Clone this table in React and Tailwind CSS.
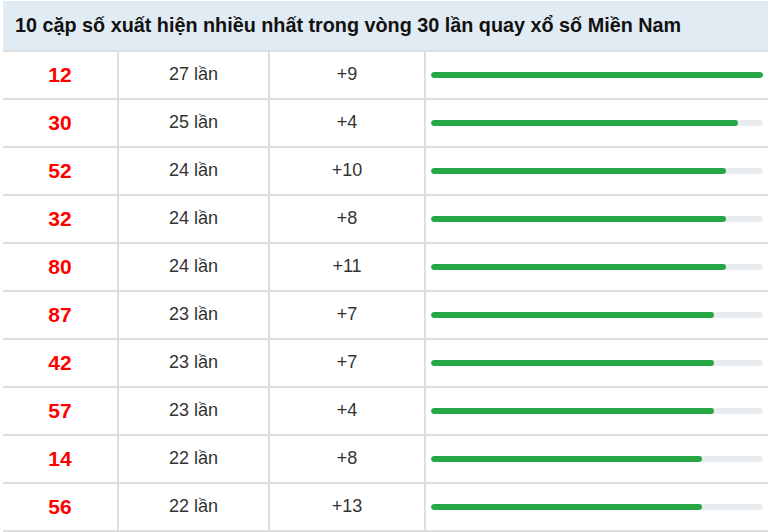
import React from "react";

const rows = [
  ["12", 27, "+9"],
  ["30", 25, "+4"],
  ["52", 24, "+10"],
  ["32", 24, "+8"],
  ["80", 24, "+11"],
  ["87", 23, "+7"],
  ["42", 23, "+7"],
  ["57", 23, "+4"],
  ["14", 22, "+8"],
  ["56", 22, "+13"],
];

export default function App() {
  return (
    <div className="w-[770px] h-[532px] bg-white" style={{ fontFamily: '"Liberation Sans", Arial, sans-serif' }}>
      <div className="ml-[3px] mr-[2px] pt-[1px]">
        <div className="h-[49px] bg-[#e1ebf3] flex items-center pl-[12px] text-[19.8px] font-bold text-[#111]">
          10 cặp số xuất hiện nhiều nhất trong vòng 30 lần quay xổ số Miền Nam
        </div>
        <div className="border-t-2 border-[#dedede]">
          {rows.map(([num, cnt, diff]) => (
            <div key={num} className="flex h-[48px] border-b-2 border-[#dedede]">
              <div className="w-[114px] flex items-center justify-center pb-[1px] text-[21px] font-bold text-[#ff0000]">{num}</div>
              <div className="w-[151px] border-l-2 border-[#dedede] flex items-center justify-center pb-[1px] text-[18px] text-[#333]">{cnt} lần</div>
              <div className="w-[156px] border-l-2 border-[#dedede] flex items-center justify-center pb-[1px] text-[18px] text-[#333]">{diff}</div>
              <div className="flex-1 border-l-2 border-[#dedede] flex items-center pl-[5px] pr-[5px]">
                <div className="w-full h-[6px] rounded-full bg-[#e9ecef] overflow-hidden">
                  <div className="h-full rounded-full bg-[#28a745]" style={{ width: `${(cnt / 27) * 100}%` }} />
                </div>
              </div>
            </div>
          ))}
        </div>
      </div>
    </div>
  );
}
